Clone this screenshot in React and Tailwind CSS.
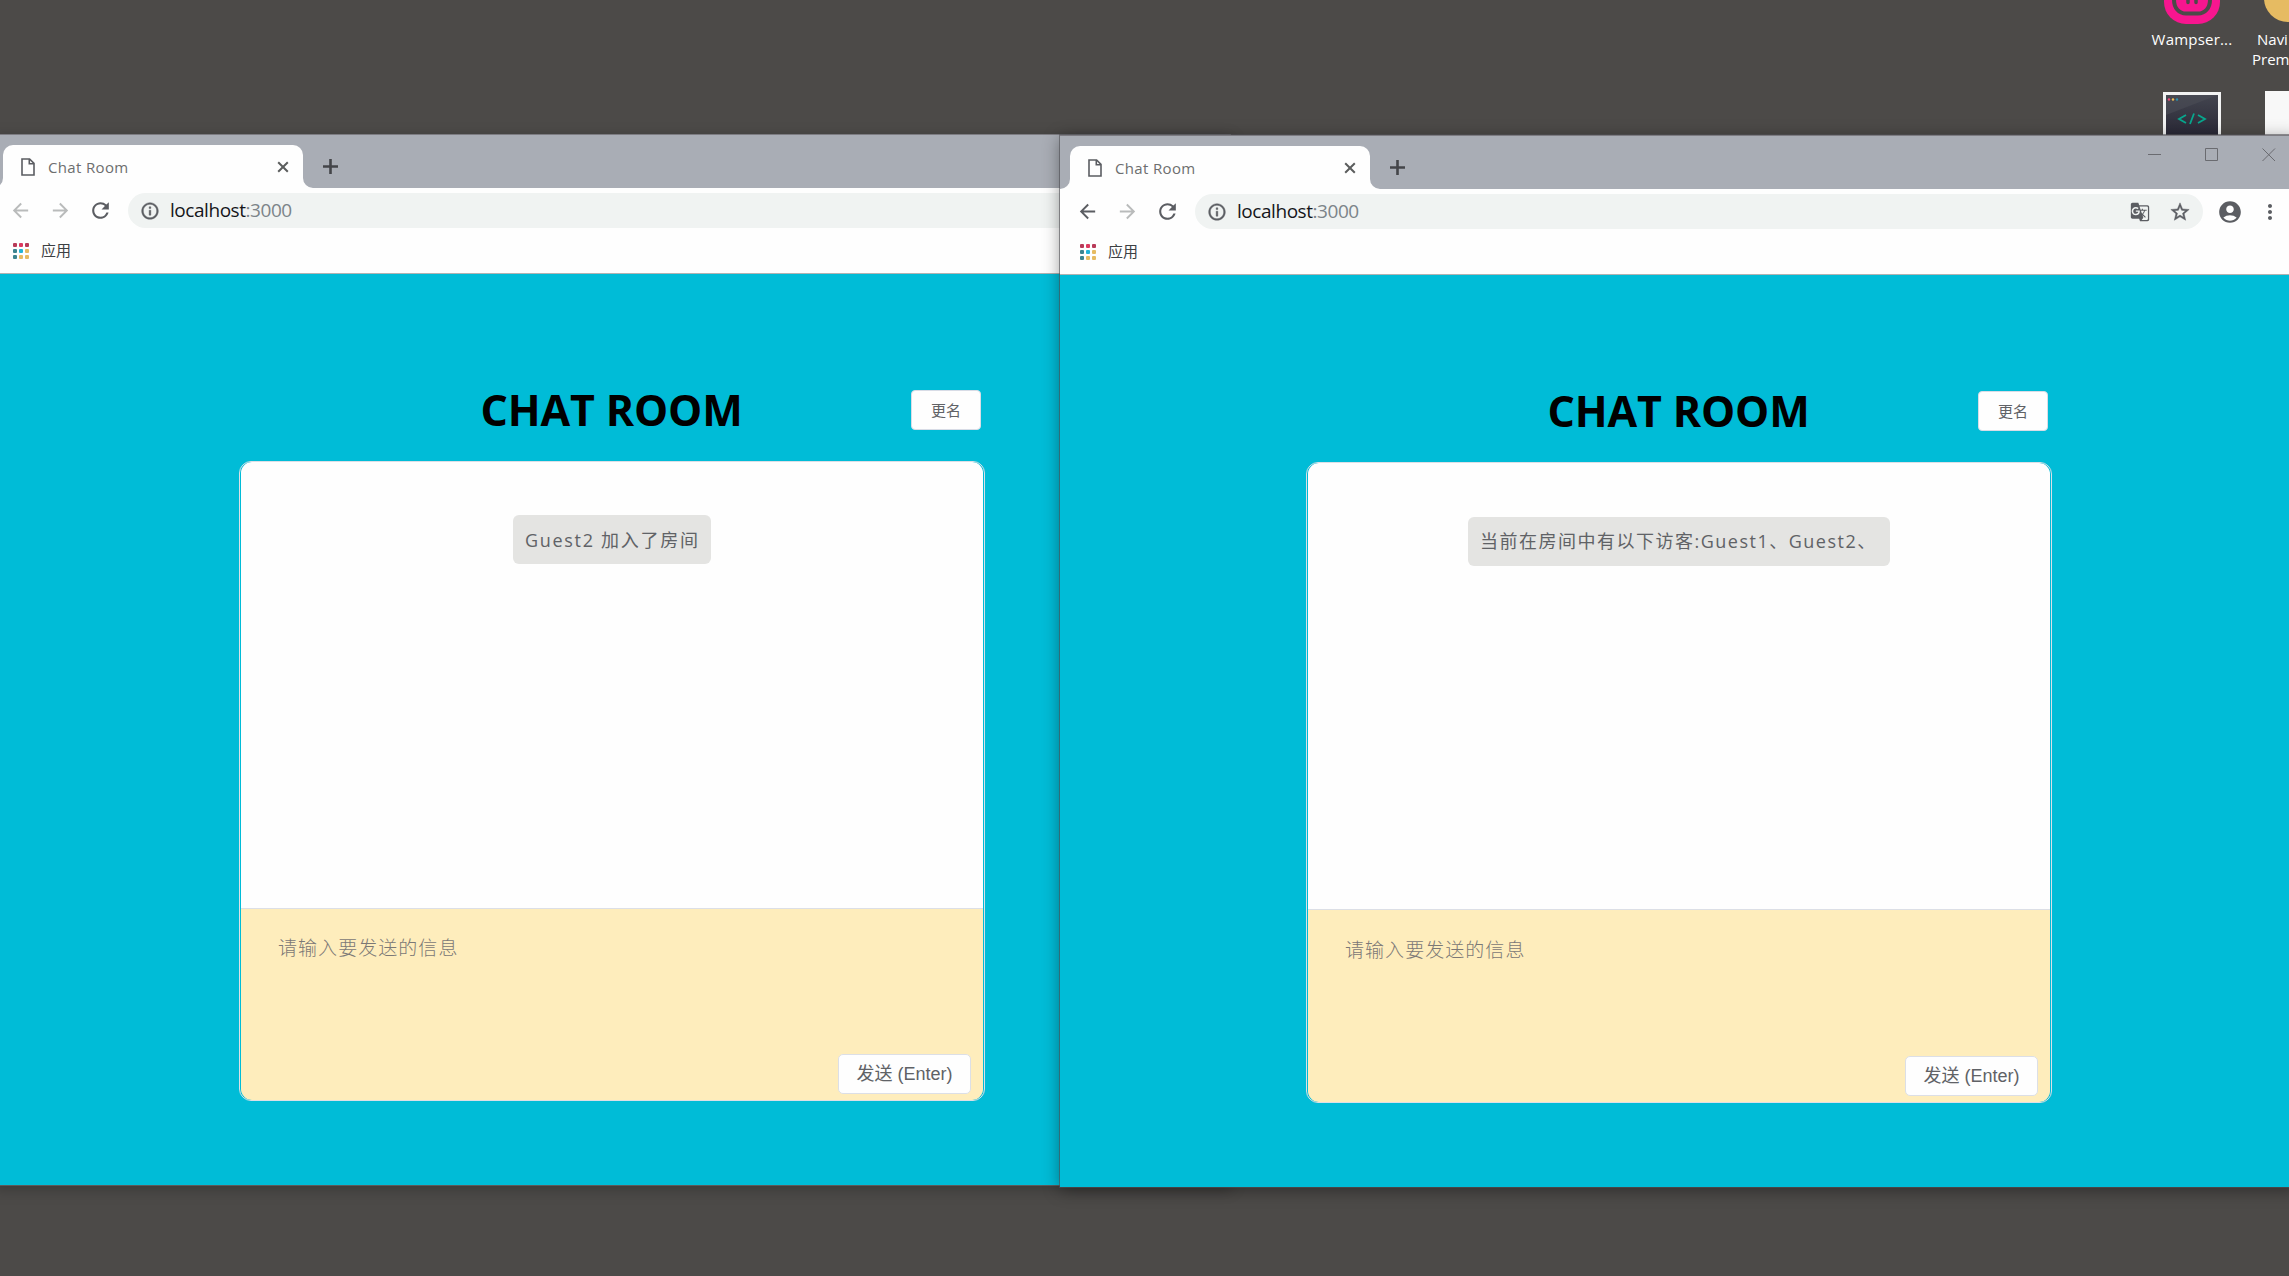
import React from "react";
import { MdArrowBack, MdArrowForward, MdRefresh, MdInfoOutline, MdStarBorder, MdAccountCircle, MdMoreVert, MdGTranslate } from "react-icons/md";

const UI = "font-['Open_Sans','Noto_Sans_CJK_SC',sans-serif]";

function FileIcon() {
  return (
    <svg width="14" height="18" viewBox="0 0 14 18" fill="none" stroke="#5b5d62" strokeWidth="1.6">
      <path d="M1 1h7.6L13 5.4V17H1z" />
      <path d="M8.3 1v4.8H13" />
    </svg>
  );
}

function AppsGrid() {
  const dots = ["#b83a58", "#dd3a60", "#b83a58", "#3d8591", "#22b4d8", "#e6bb62", "#3d8591", "#e6bb62", "#e6bb62"];
  return (
    <div className="grid grid-cols-3 gap-[2px]">
      {dots.map((c, i) => (
        <span key={i} className="h-[4.3px] w-[4.3px] rounded-[1px]" style={{ backgroundColor: c }} />
      ))}
    </div>
  );
}

function Flare({ flip }) {
  return (
    <svg className={flip ? "-scale-x-100" : ""} width="10" height="10" viewBox="0 0 10 10">
      <path d="M10 0v10H0A10 10 0 0 0 10 0z" fill="#fefefe" />
    </svg>
  );
}

function TabStrip({ controls }) {
  return (
    <div className="flex h-[54px] items-end border-t border-[#7d7c82] bg-[#a9adb5]">
      <Flare />
      <div className="flex h-[43px] w-[300px] items-center rounded-t-[10px] bg-[#fefefe] pr-[14px] pl-[18px]">
        <FileIcon />
        <span className="ml-[13px] text-[15px] leading-5 tracking-[0.35px] text-[#6d6e6e]">Chat Room</span>
        <svg className="ml-auto" width="12" height="12" viewBox="0 0 12 12" stroke="#5b5d5d" strokeWidth="2">
          <path d="M1.2 1.2l9.6 9.6M10.8 1.2l-9.6 9.6" />
        </svg>
      </div>
      <Flare flip />
      <svg className="mb-[14px] ml-[10px]" width="15" height="15" viewBox="0 0 15 15" stroke="#444549" strokeWidth="2.6">
        <path d="M7.5 0v15M0 7.5h15" />
      </svg>
      {controls && (
        <svg className="mr-[22px] mb-[27px] ml-auto" width="128" height="14" viewBox="0 0 128 14" fill="none" stroke="#6a6b70" strokeWidth="1">
          <path d="M0 6.5h13M57.5.5h12v12h-12zM114.5.5l12.5 12.5M127 .5l-12.5 12.5" />
        </svg>
      )}
    </div>
  );
}

function Toolbar({ active }) {
  return (
    <div className="flex h-[45px] items-center bg-[#fefefe] pl-4 text-[#5b5d62]">
      <MdArrowBack size={23} className={active ? "text-[#5b5d62]" : "text-[#b9bbbb]"} />
      <MdArrowForward size={23} className="ml-[17px] text-[#b9bbbb]" />
      <MdRefresh size={25} className="ml-4" />
      <div className="ml-[15px] flex h-[35px] w-[1008px] items-center rounded-full bg-[#f0f3f2] pr-[12px] pl-[12px]">
        <MdInfoOutline size={20} className="[&_path:last-child]:stroke-current [&_path:last-child]:[stroke-width:0.5]" />
        <span className="mb-[2px] ml-[10px] text-[19px] leading-6 tracking-[-0.45px] text-[#15161a]">
          localhost<span className="text-[#7c8489]">:3000</span>
        </span>
        <MdGTranslate size={20} className="ml-auto" />
        <MdStarBorder size={22} className="ml-[19px] [&_path:last-child]:stroke-current [&_path:last-child]:[stroke-width:0.5]" />
      </div>
      <MdAccountCircle size={26} className="ml-[14px] shrink-0" />
      <MdMoreVert size={24} className="ml-[15px] shrink-0" />
    </div>
  );
}

function ChatPage({ message, shifted }) {
  return (
    <div className={`flex flex-col items-center bg-[#00bcd7] ${shifted ? "h-[912px]" : "h-[911px]"}`}>
      <div className="mt-[116px] flex h-10 w-[746px] items-center">
        <div className="w-[73px]" />
        <h1 className="flex-1 text-center text-[43px] leading-10 font-bold tracking-[-0.15px] text-black">CHAT ROOM</h1>
        <button className="mr-1 h-10 w-[70px] rounded-[4px] border border-[#d8dce6] bg-[#fefefe] text-[15px] text-[#606266]">更名</button>
      </div>
      <div className={`mt-[31px] w-[746px] overflow-hidden rounded-xl border border-[#dcdfe6] px-px ${shifted ? "h-[641px]" : "h-[640px]"}`}>
        <div className="flex h-full flex-col overflow-hidden rounded-[11px]">
          <div className="flex h-[446px] items-start justify-center bg-[#fefefe]">
            <div className={`flex h-[49px] items-center rounded-md bg-[#e4e4e2] pl-3 text-[18px] whitespace-nowrap text-[#606266] ${shifted ? "mt-[54px] w-[422px] tracking-[1.5px]" : "mt-[53px] w-[198px] pt-px tracking-[1.7px]"}`}>
              {message}
            </div>
          </div>
          <div className="flex flex-1 flex-col items-end justify-between border-t border-[#dcdfe6] bg-[#feedbc] pr-3">
            <div className={`w-full pl-[37px] font-['Noto_Sans_CJK_SC',sans-serif] text-[19px] leading-6 font-light tracking-[1.05px] text-[#7b7876] ${shifted ? "mt-[27px]" : "mt-[26px]"}`}>
              请输入要发送的信息
            </div>
            <button className="mb-[6px] h-10 w-[133px] rounded-[5px] border border-[#dcdfe6] bg-[#fefefe] font-['Liberation_Sans','Noto_Sans_CJK_SC',sans-serif] text-[18px] text-[#606266]">
              发送 (Enter)
            </button>
          </div>
        </div>
      </div>
    </div>
  );
}

function BrowserWindow({ className, active, message }) {
  return (
    <section className={`absolute w-[1238px] ${className}`}>
      <TabStrip controls={active} />
      <Toolbar active={active} />
      <div className="flex h-[41px] items-center border-b border-[#b0b2b2] bg-[#fefefe] pb-1 pl-[19.5px] text-[15px] text-[#3c4043]">
        <AppsGrid />
        <span className="mb-px ml-[11.5px]">应用</span>
      </div>
      <ChatPage message={message} shifted={active} />
    </section>
  );
}

function DesktopIcons() {
  return (
    <div className="absolute top-0 left-[2142px] flex h-[140px] text-[15px] leading-5 text-white">
      <div className="flex w-[100px] flex-col items-center">
        <svg className="shrink-0" width="56" height="24" viewBox="0 0 56 24" fill="none">
          <path d="M0 0h56v2a22 22 0 0 1-22 22H22A22 22 0 0 1 0 2z" fill="#f7168f" />
          <path d="M10 0c0 8 5 13.500 12 13.500h12c7 0 12-5.500 12-13.500" stroke="#4c4a48" strokeWidth="4" />
          <path d="M17 0c0 5 2 7.500 5 7.500 3 0 4-1 6-2 2 1 3 2 6 2 3 0 5-2.500 5-7.500" fill="#f7168f" />
          <path d="M24 0v2.500M32 0v2.500" stroke="#4c4a48" strokeWidth="3.500" strokeLinecap="round" />
        </svg>
        <span className="mt-[5px] tracking-[0.2px]">Wampser...</span>
        <div className="mt-[43px] h-[60px] w-[58px] shrink-0 border-[3px] border-[#f2f3f3] bg-gradient-to-b from-[#43454f] to-[#211f2e]">
          <svg width="52" height="40" viewBox="0 0 52 40" fill="none">
            <path d="M0 0h52L0 20z" fill="#4c4e58" opacity=".55" />
            <circle cx="3" cy="4.500" r="1.200" fill="#f04b78" />
            <circle cx="7" cy="4.500" r="1.200" fill="#f0bd52" />
            <circle cx="11" cy="4.500" r="1.200" fill="#2793b2" />
            <path d="M20 20l-7 4 7 4M32 20l7 4-7 4M28 18.500l-4 10.500" stroke="#08a78e" strokeWidth="1.800" />
          </svg>
        </div>
      </div>
      <div className="flex w-[80px] flex-col items-start">
        <div className="-mt-8 ml-[22px] h-[54px] w-[56px] shrink-0 rounded-[24px] bg-[#e6bb62]" />
        <span className="mt-[7px] ml-[15px]">Navi</span>
        <span className="ml-[10px]">Prem</span>
        <div className="mt-[22px] ml-[23px] h-[60px] w-[56px] shrink-0 bg-[#f8f8f8]" />
      </div>
    </div>
  );
}

export default function App() {
  return (
    <main className={`relative h-[1276px] w-[2289px] overflow-hidden bg-[#4c4a48] ${UI}`}>
      <DesktopIcons />
      <BrowserWindow
        className="top-[134px] -left-[7px] shadow-[0_1px_0_#5b5a5a,0_4px_14px_rgba(0,0,0,0.25)]"
        message="Guest2 加入了房间"
      />
      <BrowserWindow
        active
        className="top-[135px] left-[1060px] shadow-[0_0_0_1px_rgba(80,80,85,0.6),0_3px_16px_rgba(0,0,0,0.4)]"
        message="当前在房间中有以下访客:Guest1、Guest2、"
      />
    </main>
  );
}
